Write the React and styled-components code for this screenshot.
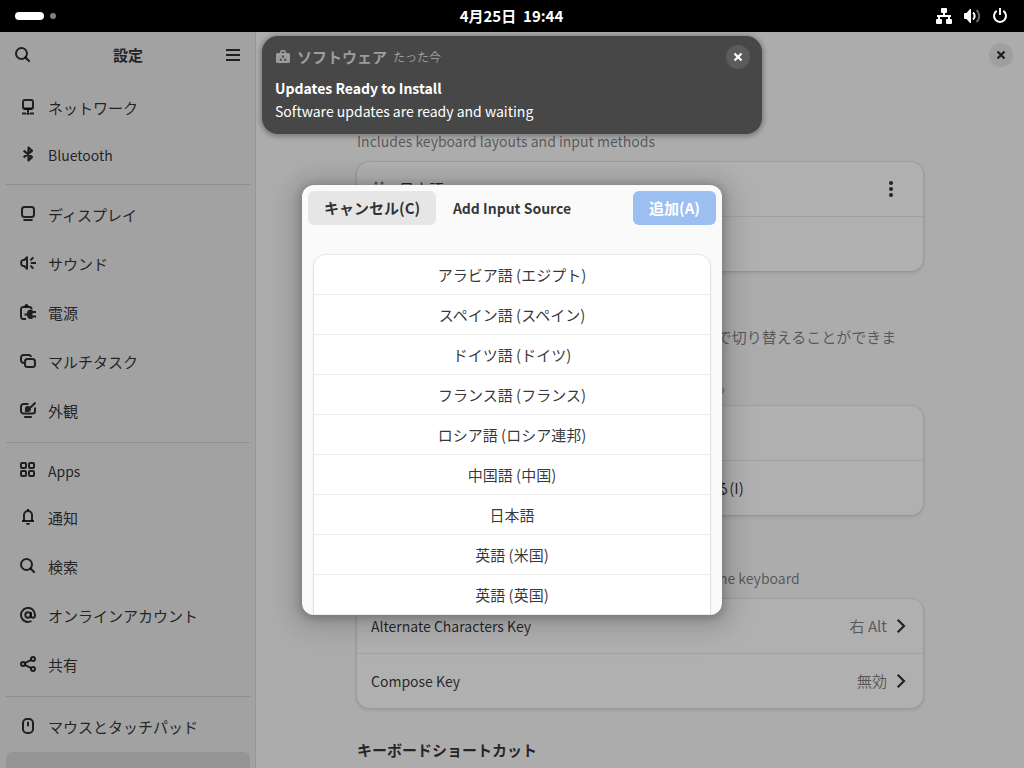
import React from "react";
import styled, { createGlobalStyle, css } from "styled-components";

const GlobalStyle = createGlobalStyle`
  *, *::before, *::after { box-sizing: border-box; }
  body {
    margin: 0;
    background: #000;
    font-family: "Noto Sans CJK JP", "Noto Sans", sans-serif;
    font-size: 15px;
    line-height: 24px;
    color: rgba(0, 0, 6, 0.8);
  }
  button { font: inherit; color: inherit; border: 0; padding: 0; background: none; }
  h1, h2, h3, p, ul { margin: 0; padding: 0; font-size: inherit; }
  ul { list-style: none; }
  a { color: inherit; text-decoration: none; }
`;

/* Latin-only strings are set one step smaller than Japanese ones. */
const textSize = css`
  font-size: ${(p) => (p.$latin ? 14 : 15)}px;
`;

/* ---------- icons ---------- */

const Svg = styled.svg`
  display: block;
  flex: none;
  width: 16px;
  height: 16px;
  fill: none;
  stroke: currentColor;
  stroke-width: 2;
`;

const shapes = {
  search: (
    <>
      <circle cx="6.5" cy="6.5" r="5.5" />
      <path d="M10.5 10.5L14 14" strokeLinecap="round" strokeWidth="2.2" />
    </>
  ),
  menu: <path d="M1 3h14M1 8h14M1 13h14" />,
  network: (
    <>
      <rect x="3" y="1" width="10" height="9" rx="2" />
      <path d="M4 9.500h8M8 10v3M2 14.500h4M10 14.500h4" />
      <circle cx="8" cy="14.500" r="1.500" fill="currentColor" stroke="none" />
    </>
  ),
  bluetooth: <path d="M3.600 4.600l8.400 6.600-3.500 3.200V1.600L12 4.800l-8.400 6.600" strokeWidth="2.200" strokeLinejoin="round" />,
  display: (
    <>
      <rect x="2" y="1" width="12" height="10" rx="2.500" />
      <path d="M4.200 14h7.600" strokeLinecap="round" />
    </>
  ),
  sound: (
    <>
      <path d="M7 2.200v11.600L4.200 11H3.400A2.200 2.200 0 0 1 1.200 8.800V7.200A2.200 2.200 0 0 1 3.400 5h.8z" strokeLinejoin="round" />
      <path d="M10.500 5.400l2.800-3M10.800 8H16M10.500 10.600l2.800 3" />
    </>
  ),
  power: (
    <>
      <path d="M6 15H3.500A2.200 2.200 0 0 1 1 12.800V5.200A2.200 2.200 0 0 1 3.200 3h6.300A2 2 0 0 1 11.500 5" />
      <path d="M4.500 2A2 2 0 0 1 6.500 0a2 2 0 0 1 2 2v1h-4zM12.500 5.500v9.500H11a4 4 0 0 1-4-3.500H4.500v-2H7a4 4 0 0 1 4-4zM12 7h4v2h-4zM12 11.500h4v2h-4z" fill="currentColor" stroke="none" />
    </>
  ),
  multitask: (
    <>
      <path d="M4 9.900A3 3 0 0 1 1 7V4.500A2.500 2.500 0 0 1 3.500 2H8.500A2.500 2.500 0 0 1 11 4" />
      <rect x="5" y="6" width="10" height="8" rx="2.500" />
    </>
  ),
  appearance: (
    <>
      <path d="M8.500 2h-5A2.500 2.500 0 0 0 1 4.500v4A2.500 2.500 0 0 0 3.500 11.500h9A2.500 2.500 0 0 0 15 9V5.500M4.200 15h7.600" />
      <path d="M10.500 5.500L15.500.5" />
      <path d="M5 10V7.500a3 3 0 1 1 3 2.500z" fill="currentColor" stroke="none" />
    </>
  ),
  apps: (
    <>
      <rect x="1" y="1" width="5" height="5" rx="1" />
      <rect x="9" y="1" width="5" height="5" rx="1" />
      <rect x="1" y="9" width="5" height="5" rx="1" />
      <rect x="9" y="9" width="5" height="5" rx="1" />
    </>
  ),
  bell: (
    <>
      <path d="M4 12V6a4 4 0 0 1 8 0v6" />
      <path d="M2 12h12" />
      <path d="M6 14h4a2 2 0 0 1-4 0zM7 0h2v2H7z" fill="currentColor" stroke="none" />
    </>
  ),
  at: (
    <>
      <circle cx="8" cy="8" r="2.700" />
      <path d="M10.900 5v3.700a2 2 0 0 0 4.100 0V8a7 7 0 1 0-3.500 6" />
    </>
  ),
  share: (
    <>
      <circle cx="3" cy="8" r="2" />
      <circle cx="13" cy="3" r="2" />
      <circle cx="13" cy="13" r="2" />
      <path d="M4.800 7.100l6.400-3.200M4.800 8.900l6.400 3.200" />
    </>
  ),
  mouse: (
    <>
      <rect x="3" y="1" width="10" height="14" rx="4" />
      <path d="M8 4.500v3" strokeLinecap="round" />
    </>
  ),
  keyboard: (
    <>
      <rect x="1" y="3" width="14" height="10" rx="2" />
      <path d="M4 6.500h8M5 10h6" />
    </>
  ),
  close: <path d="M4.500 4.500l7 7M11.500 4.500l-7 7" strokeWidth="2.200" />,
  more: (
    <g fill="currentColor" stroke="none">
      <circle cx="8" cy="2" r="2" />
      <circle cx="8" cy="8" r="2" />
      <circle cx="8" cy="14" r="2" />
    </g>
  ),
  handle: (
    <g fill="currentColor" stroke="none">
      <circle cx="5" cy="2" r="1.500" />
      <circle cx="11" cy="2" r="1.500" />
      <circle cx="5" cy="7" r="1.500" />
      <circle cx="11" cy="7" r="1.500" />
      <circle cx="5" cy="12" r="1.500" />
      <circle cx="11" cy="12" r="1.500" />
    </g>
  ),
  next: <path d="M4.700 1.700L11 8l-6.300 6.300" strokeWidth="2.200" />,
  wired: (
    <>
      <g fill="currentColor" stroke="none">
        <rect x="5" y="0" width="6" height="5" rx="1" />
        <rect x="0" y="11" width="6" height="5" rx="1" />
        <rect x="10" y="11" width="6" height="5" rx="1" />
      </g>
      <path d="M8 4v4M1 8h14M3 8v3M13 8v3" />
    </>
  ),
  volume: (
    <>
      <path d="M0 6a1 1 0 0 1 1-1h1.500L6 1h1v14H6l-3.500-4H1a1 1 0 0 1-1-1z" fill="currentColor" stroke="none" />
      <path d="M9 4.500a4.500 4.500 0 0 1 0 7" />
      <path d="M12.500 2a8 8 0 0 1 0 12" opacity="0.4" />
    </>
  ),
  shutdown: (
    <>
      <path d="M4.700 2.900a6 6 0 1 0 6.600 0" />
      <path d="M8 0v7" />
    </>
  ),
  software: (
    <path
      fillRule="evenodd"
      fill="currentColor"
      stroke="none"
      d="M5 4V3a2 2 0 0 1 2-2h2a2 2 0 0 1 2 2v1h2.500A1.500 1.500 0 0 1 15 5.500v7A1.500 1.500 0 0 1 13.500 14h-11A1.500 1.500 0 0 1 1 12.500v-7A1.500 1.500 0 0 1 2.500 4zM6.500 4h3V2.700h-3zM7 6.500v2h2v-2zM4.800 9.700v2h2v-2zM9.200 9.700v2h2v-2z"
    />
  ),
};

const Icon = ({ name }) => (
  <Svg viewBox="0 0 16 16" aria-hidden="true">
    {shapes[name]}
  </Svg>
);

/* ---------- shell ---------- */

const Desktop = styled.div`
  display: flex;
  flex-direction: column;
  height: 100vh;
  overflow: hidden;
`;

const TopBar = styled.header`
  display: grid;
  grid-template-columns: 1fr auto 1fr;
  align-items: center;
  flex: none;
  height: 32px;
  padding: 0 16px 0 15px;
  background: #000;
  color: #fff;
`;

const Workspaces = styled.button`
  display: flex;
  align-items: center;
  justify-self: start;
  gap: 6px;
`;

const WorkspaceDot = styled.span`
  width: ${(p) => (p.$active ? 29 : 6)}px;
  height: ${(p) => (p.$active ? 8 : 6)}px;
  border-radius: 4px;
  background: ${(p) => (p.$active ? "#fff" : "#808080")};
`;

const Clock = styled.button`
  font-weight: 700;
  white-space: pre;
`;

const SystemMenu = styled.button`
  display: flex;
  justify-self: end;
  gap: 12px;
`;

const Stage = styled.div`
  position: relative;
  display: flex;
  flex: 1;
  min-height: 0;
`;

/* ---------- settings window ---------- */

const Sidebar = styled.nav`
  display: flex;
  flex-direction: column;
  flex: none;
  width: 256px;
  background: #ebebeb;
  border-right: 1px solid #dbdbdb;
`;

const HeaderBar = styled.div`
  display: flex;
  align-items: center;
  justify-content: ${(p) => (p.$end ? "flex-end" : "space-between")};
  flex: none;
  height: 46px;
  padding: ${(p) => (p.$end ? "0 11px" : "0 14px 0 15px")};
`;

const Title = styled.h1`
  ${textSize}
  font-weight: 700;
`;

const IconButton = styled.button`
  display: flex;
  align-items: center;
  justify-content: center;
`;

const CloseButton = styled(IconButton)`
  width: 24px;
  height: 24px;
  border-radius: 50%;
  background: ${(p) => (p.$dark ? "#5b5b5b" : "#e6e6e6")};
  color: ${(p) => (p.$dark ? "#fff" : "inherit")};
`;

const NavScroll = styled.div`
  flex: 1;
  min-height: 0;
  padding: 6px 5px 6px 6px;
  overflow-y: auto;
  scrollbar-width: none;
`;

const NavGroup = styled.ul`
  & + & {
    margin-top: 6px;
    padding-top: 6px;
    border-top: 1px solid #cfcfcf;
  }
`;

const NavLink = styled.a`
  ${textSize}
  display: flex;
  align-items: center;
  gap: 12px;
  height: ${(p) => (p.$latin ? 45 : 49)}px;
  padding: 0 14px 2px;
  border-radius: 6px;
  background: ${(p) => (p.$selected ? "rgba(0, 0, 0, 0.08)" : "transparent")};

  ${Svg} {
    margin-bottom: 2px;
  }
`;

const Panel = styled.main`
  display: flex;
  flex-direction: column;
  flex: 1;
  min-width: 0;
  background: #fafafa;
`;

const PanelScroll = styled.div`
  flex: 1;
  min-height: 0;
  padding: 27px 24px;
  overflow-y: auto;
  scrollbar-width: none;
`;

const Clamp = styled.div`
  display: flex;
  flex-direction: column;
  gap: 30px;
  max-width: 566px;
  margin: 0 auto;
`;

const SectionTitle = styled.h2`
  ${textSize}
  font-weight: 700;
  line-height: ${(p) => (p.$latin ? 21 : 24)}px;
`;

const Description = styled.p`
  ${textSize}
  color: rgba(0, 0, 6, 0.5);
  white-space: pre-line;
`;

const Card = styled.div`
  margin-top: 9px;
  border-radius: 12px;
  background: #fff;
  box-shadow: 0 0 0 1px rgba(0, 0, 6, 0.04), 0 1px 3px 1px rgba(0, 0, 6, 0.08), 0 2px 6px 2px rgba(0, 0, 6, 0.03);

  & > * + * {
    height: 55px;
    border-top: 1px solid #ebebeb;
  }
`;

const rowStyle = css`
  display: flex;
  align-items: center;
  width: 100%;
  min-height: 54px;
  padding: 0 14px;
`;

const Row = styled.div`
  ${rowStyle}
  gap: 12px;
  padding-right: 24px;
`;

const RowLabel = styled.span`
  ${textSize}
  flex: 1;
`;

const Handle = styled.span`
  color: rgba(0, 0, 6, 0.5);
`;

const AddRow = styled.button`
  ${rowStyle}
  justify-content: center;
`;

const RadioRow = styled.label`
  ${rowStyle}
  gap: 24px;
`;

const Radio = styled.input`
  width: 20px;
  height: 20px;
  margin: 0;
`;

const LinkRow = styled.button`
  ${rowStyle}
  gap: 6px;
  text-align: left;
`;

const Value = styled.span`
  color: rgba(0, 0, 6, 0.5);
`;

/* ---------- dialog ---------- */

const Scrim = styled.div`
  position: absolute;
  inset: 0;
  display: flex;
  align-items: center;
  justify-content: center;
  background: rgba(0, 0, 0, 0.31);
`;

const Dialog = styled.section`
  display: flex;
  flex-direction: column;
  width: 420px;
  height: 430px;
  overflow: hidden;
  border-radius: 12px;
  background: #fafafa;
  box-shadow: 0 2px 8px 2px rgba(0, 0, 0, 0.2), 0 3px 20px 10px rgba(0, 0, 0, 0.1), 0 6px 32px 16px rgba(0, 0, 0, 0.04);
`;

const DialogHeader = styled.div`
  display: grid;
  grid-template-columns: 1fr auto 1fr;
  align-items: center;
  flex: none;
  padding: 6px;
`;

const DialogButton = styled.button`
  justify-self: ${(p) => (p.$suggested ? "end" : "start")};
  height: 34px;
  padding: 0 16px;
  border-radius: 6px;
  font-weight: 700;
  background: ${(p) => (p.$suggested ? "#9abff0" : "#e6e6e6")};
  color: ${(p) => (p.$suggested ? "#fff" : "inherit")};
`;

const SourceScroll = styled.div`
  flex: 1;
  min-height: 0;
  padding: 24px 12px 0;
  overflow: hidden;
`;

const SourceList = styled.ul`
  border-radius: 12px 12px 0 0;
  background: #fff;
  box-shadow: 0 0 0 1px rgba(0, 0, 6, 0.04), 0 1px 3px 1px rgba(0, 0, 6, 0.07);
`;

const SourceButton = styled.button`
  display: block;
  width: 100%;
  height: 40px;
  border-bottom: 1px solid #ebebeb;
  text-align: center;
`;

/* ---------- notification ---------- */

const Toast = styled.aside`
  position: absolute;
  top: 4px;
  left: 50%;
  transform: translateX(-50%);
  width: 500px;
  height: 98px;
  padding: 9px 12px 9px 13px;
  border-radius: 16px;
  background: #474747;
  color: #fff;
  box-shadow: 0 1px 4px 2px rgba(0, 0, 0, 0.25);
`;

const ToastHeader = styled.div`
  display: flex;
  align-items: center;
  gap: 6px;
  color: #9c9c9c;
`;

const ToastApp = styled.span`
  font-weight: 700;
`;

const ToastTime = styled.time`
  flex: 1;
  font-size: 12px;
`;

const ToastTitle = styled.h3`
  ${textSize}
  margin-top: 8px;
  line-height: 23px;
  font-weight: 700;
`;

const ToastBody = styled.p`
  ${textSize}
  line-height: 23px;
`;

/* ---------- data ---------- */

const navGroups = [
  [
    { icon: "network", label: "ネットワーク" },
    { icon: "bluetooth", label: "Bluetooth", latin: true },
  ],
  [
    { icon: "display", label: "ディスプレイ" },
    { icon: "sound", label: "サウンド" },
    { icon: "power", label: "電源" },
    { icon: "multitask", label: "マルチタスク" },
    { icon: "appearance", label: "外観" },
  ],
  [
    { icon: "apps", label: "Apps", latin: true },
    { icon: "bell", label: "通知" },
    { icon: "search", label: "検索" },
    { icon: "at", label: "オンラインアカウント" },
    { icon: "share", label: "共有" },
  ],
  [
    { icon: "mouse", label: "マウスとタッチパッド" },
    { icon: "keyboard", label: "キーボード", selected: true },
  ],
];

const sources = [
  "アラビア語 (エジプト)",
  "スペイン語 (スペイン)",
  "ドイツ語 (ドイツ)",
  "フランス語 (フランス)",
  "ロシア語 (ロシア連邦)",
  "中国語 (中国)",
  "日本語",
  "英語 (米国)",
  "英語 (英国)",
];

const switchingHelp =
  "入力ソースは Super + スペース のショートカットキーで切り替えることができま\nす。\nこのショートカットは キーボード設定で変更できます。";

export default function App() {
  return (
    <>
      <GlobalStyle />
      <Desktop>
        <TopBar>
          <Workspaces aria-label="ワークスペース">
            <WorkspaceDot $active />
            <WorkspaceDot />
          </Workspaces>
          <Clock>{"4月25日  19:44"}</Clock>
          <SystemMenu aria-label="システム">
            <Icon name="wired" />
            <Icon name="volume" />
            <Icon name="shutdown" />
          </SystemMenu>
        </TopBar>

        <Stage>
          <Sidebar>
            <HeaderBar>
              <IconButton aria-label="検索">
                <Icon name="search" />
              </IconButton>
              <Title>設定</Title>
              <IconButton aria-label="メニュー">
                <Icon name="menu" />
              </IconButton>
            </HeaderBar>
            <NavScroll>
              {navGroups.map((group, i) => (
                <NavGroup key={i}>
                  {group.map((item) => (
                    <li key={item.label}>
                      <NavLink href="#" $latin={item.latin} $selected={item.selected}>
                        <Icon name={item.icon} />
                        {item.label}
                      </NavLink>
                    </li>
                  ))}
                </NavGroup>
              ))}
            </NavScroll>
          </Sidebar>

          <Panel>
            <HeaderBar $end>
              <CloseButton aria-label="閉じる">
                <Icon name="close" />
              </CloseButton>
            </HeaderBar>
            <PanelScroll>
              <Clamp>
                <section>
                  <SectionTitle>入力ソース</SectionTitle>
                  <Description $latin>Includes keyboard layouts and input methods</Description>
                  <Card>
                    <Row>
                      <Handle>
                        <Icon name="handle" />
                      </Handle>
                      <RowLabel>日本語</RowLabel>
                      <IconButton aria-label="オプション">
                        <Icon name="more" />
                      </IconButton>
                    </Row>
                    <AddRow>入力ソースを追加</AddRow>
                  </Card>
                </section>

                <section>
                  <SectionTitle>入力ソースの切り替え</SectionTitle>
                  <Description>{switchingHelp}</Description>
                  <Card>
                    <RadioRow>
                      <Radio type="radio" name="switching" defaultChecked />
                      すべてのウィンドウで同じソースを使う(S)
                    </RadioRow>
                    <RadioRow>
                      <Radio type="radio" name="switching" />
                      ウィンドウごとに個別の入力ソースを使用する(I)
                    </RadioRow>
                  </Card>
                </section>

                <section>
                  <SectionTitle $latin>Special Character Entry</SectionTitle>
                  <Description $latin>
                    Methods for entering symbols and letter variants using the keyboard
                  </Description>
                  <Card>
                    <LinkRow>
                      <RowLabel $latin>Alternate Characters Key</RowLabel>
                      <Value>右 Alt</Value>
                      <Icon name="next" />
                    </LinkRow>
                    <LinkRow>
                      <RowLabel $latin>Compose Key</RowLabel>
                      <Value>無効</Value>
                      <Icon name="next" />
                    </LinkRow>
                  </Card>
                </section>

                <section>
                  <SectionTitle>キーボードショートカット</SectionTitle>
                </section>
              </Clamp>
            </PanelScroll>
          </Panel>

          <Scrim>
            <Dialog role="dialog" aria-labelledby="dialog-title">
              <DialogHeader>
                <DialogButton>キャンセル(C)</DialogButton>
                <Title as="h2" id="dialog-title" $latin>
                  Add Input Source
                </Title>
                <DialogButton $suggested disabled>
                  追加(A)
                </DialogButton>
              </DialogHeader>
              <SourceScroll>
                <SourceList>
                  {sources.map((name) => (
                    <li key={name}>
                      <SourceButton>{name}</SourceButton>
                    </li>
                  ))}
                </SourceList>
              </SourceScroll>
            </Dialog>
          </Scrim>

          <Toast role="status">
            <ToastHeader>
              <Icon name="software" />
              <ToastApp>ソフトウェア</ToastApp>
              <ToastTime>たった今</ToastTime>
              <CloseButton $dark aria-label="閉じる">
                <Icon name="close" />
              </CloseButton>
            </ToastHeader>
            <ToastTitle $latin>Updates Ready to Install</ToastTitle>
            <ToastBody $latin>Software updates are ready and waiting</ToastBody>
          </Toast>
        </Stage>
      </Desktop>
    </>
  );
}
